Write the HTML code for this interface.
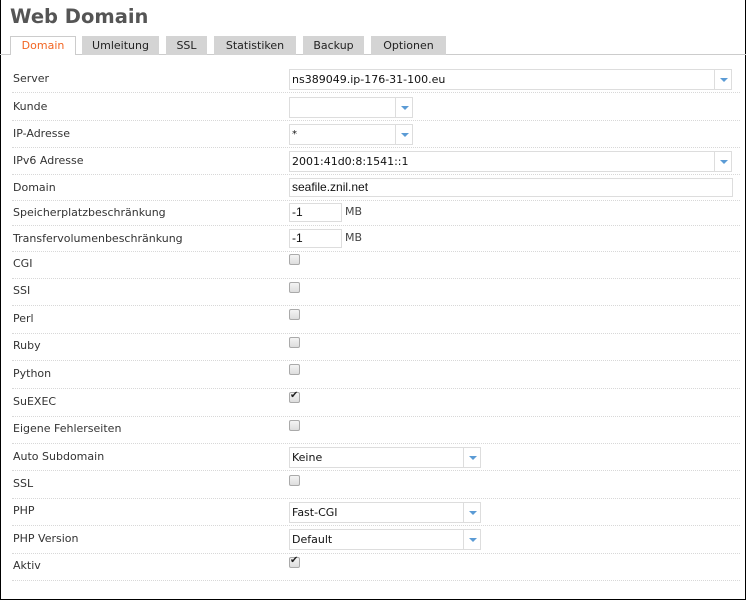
<!DOCTYPE html>
<html><head><meta charset="utf-8"><style>
*{margin:0;padding:0;box-sizing:border-box}
body{width:746px;height:600px;background:#fff;font-family:"DejaVu Sans","Liberation Sans",sans-serif;font-size:11px;color:#333;position:relative;overflow:hidden}
.frame{position:absolute;left:0;top:0;width:746px;height:600px;border:1px solid #000;border-top:none}
h1{position:absolute;left:10px;top:5px;font-size:19.5px;font-weight:bold;color:#555;letter-spacing:0}
.tab{position:absolute;top:36px;height:19px;background:#d4d4d4;font-size:11px;text-align:center;line-height:19px;color:#222}
.tab.a{background:#fff;border:1px solid #ccc;border-bottom:none;color:#f26522;height:19px;line-height:17px}
.tl{position:absolute;left:0;top:54px;width:746px;height:1px;background:#ccc}
.sep{position:absolute;left:12px;width:728px;border-top:1px dotted #d8d8d8;height:0}
.lb{position:absolute;left:13px;font-size:11px;color:#333}
.in{position:absolute;left:289px;border:1px solid #ddd;background:#fff;font-size:11px;padding-left:2px;color:#111;line-height:19px}
.dd{position:absolute;top:0;right:0;width:17px;height:100%;border-left:1px solid #ddd}
.dd:after{content:"";position:absolute;left:5px;top:8px;border-left:4px solid transparent;border-right:4px solid transparent;border-top:4px solid #5b9bd5}
.cb{position:absolute;left:289px;width:11px;height:11px;border:1px solid #aaa;border-radius:2px;background:linear-gradient(#f4f4f4,#ddd)}
.cb.c:after{content:"✔";position:absolute;left:0;top:-3px;font-size:10px;color:#222}
.mb{position:absolute;left:345px;font-size:11px;color:#444}
</style></head><body>
<div class="frame"></div>
<h1>Web Domain</h1>
<div class="tl"></div>
<div class="tab a" style="left:10px;width:66px">Domain</div>
<div class="tab" style="left:82px;width:77px">Umleitung</div>
<div class="tab" style="left:166px;width:41px">SSL</div>
<div class="tab" style="left:214px;width:82px">Statistiken</div>
<div class="tab" style="left:303px;width:61px">Backup</div>
<div class="tab" style="left:371px;width:75px">Optionen</div>

<div class="sep" style="top:92px"></div><div class="sep" style="top:120px"></div><div class="sep" style="top:147px"></div><div class="sep" style="top:174px"></div><div class="sep" style="top:200px"></div><div class="sep" style="top:225px"></div><div class="sep" style="top:251px"></div><div class="sep" style="top:278px"></div><div class="sep" style="top:305px"></div><div class="sep" style="top:333px"></div><div class="sep" style="top:360px"></div><div class="sep" style="top:388px"></div><div class="sep" style="top:416px"></div><div class="sep" style="top:443px"></div><div class="sep" style="top:470px"></div><div class="sep" style="top:498px"></div><div class="sep" style="top:525px"></div><div class="sep" style="top:553px"></div><div class="sep" style="top:580px"></div>

<div class="lb" style="top:72px">Server</div>
<div class="lb" style="top:100px">Kunde</div>
<div class="lb" style="top:127px">IP-Adresse</div>
<div class="lb" style="top:154px">IPv6 Adresse</div>
<div class="lb" style="top:181px">Domain</div>
<div class="lb" style="top:206px">Speicherplatzbeschränkung</div>
<div class="lb" style="top:232px">Transfervolumenbeschränkung</div>
<div class="lb" style="top:257px">CGI</div>
<div class="lb" style="top:284px">SSI</div>
<div class="lb" style="top:312px">Perl</div>
<div class="lb" style="top:339px">Ruby</div>
<div class="lb" style="top:367px">Python</div>
<div class="lb" style="top:395px">SuEXEC</div>
<div class="lb" style="top:422px">Eigene Fehlerseiten</div>
<div class="lb" style="top:450px">Auto Subdomain</div>
<div class="lb" style="top:477px">SSL</div>
<div class="lb" style="top:504px">PHP</div>
<div class="lb" style="top:532px">PHP Version</div>
<div class="lb" style="top:559px">Aktiv</div>

<div class="in" style="top:69px;width:443px;height:21px">ns389049.ip-176-31-100.eu<div class="dd"></div></div>
<div class="in" style="top:97px;width:124px;height:21px"><div class="dd"></div></div>
<div class="in" style="top:124px;width:124px;height:21px;font-size:10px">*<div class="dd"></div></div>
<div class="in" style="top:151px;width:443px;height:21px">2001:41d0:8:1541::1<div class="dd"></div></div>
<div class="in" style="top:178px;width:444px;height:19px;line-height:17px;font-family:'Liberation Sans',sans-serif;font-size:12px">seafile.znil.net</div>
<div class="in" style="top:203px;width:53px;height:19px;line-height:17px;font-family:'Liberation Sans',sans-serif;font-size:12px">-1</div><div class="mb" style="top:205px">MB</div>
<div class="in" style="top:229px;width:53px;height:19px;line-height:17px;font-family:'Liberation Sans',sans-serif;font-size:12px">-1</div><div class="mb" style="top:231px">MB</div>

<div class="cb" style="top:254px"></div>
<div class="cb" style="top:282px"></div>
<div class="cb" style="top:309px"></div>
<div class="cb" style="top:337px"></div>
<div class="cb" style="top:364px"></div>
<div class="cb c" style="top:392px"></div>
<div class="cb" style="top:420px"></div>
<div class="in" style="top:447px;width:192px;height:21px">Keine<div class="dd"></div></div>
<div class="cb" style="top:475px"></div>
<div class="in" style="top:502px;width:192px;height:21px">Fast-CGI<div class="dd"></div></div>
<div class="in" style="top:529px;width:192px;height:21px">Default<div class="dd"></div></div>
<div class="cb c" style="top:557px"></div>
</body></html>
